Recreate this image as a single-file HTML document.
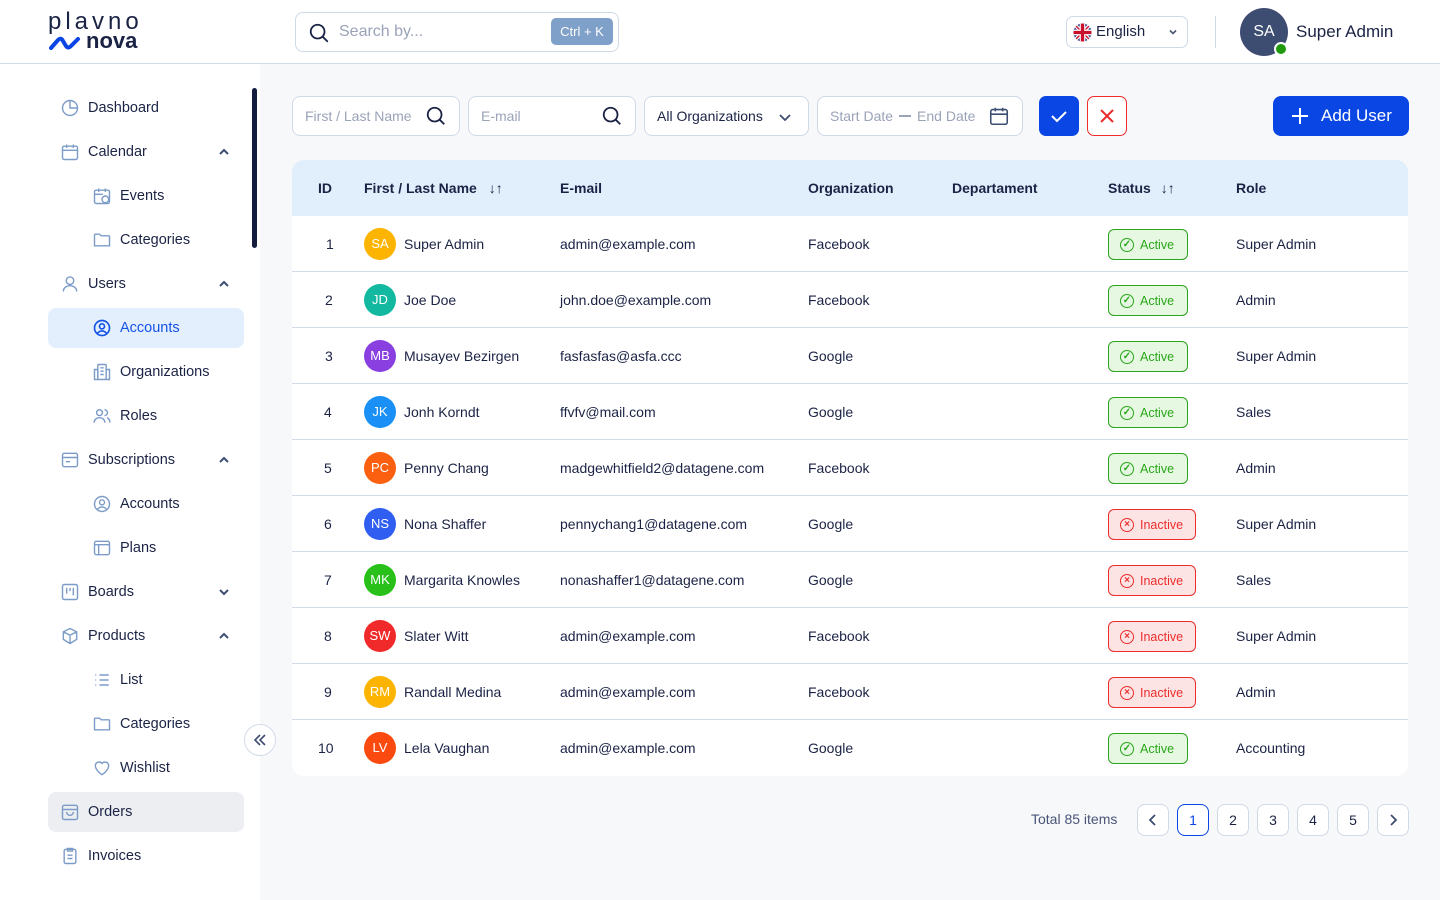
<!DOCTYPE html>
<html><head><meta charset="utf-8"><style>
*{box-sizing:border-box;margin:0;padding:0}
body{width:1440px;height:900px;overflow:hidden;font-family:"Liberation Sans",sans-serif;color:#1b2345;background:#f7f8fa;position:relative;font-size:14px}
.hdr{position:absolute;left:0;top:0;width:1440px;height:64px;background:#fff;border-bottom:1px solid #d3dbe8}
.side{position:absolute;left:0;top:64px;width:260px;height:836px;background:#fff}
.abs{position:absolute}
.it{position:absolute;left:48px;width:196px;height:40px;display:flex;align-items:center;font-size:14.5px;border-radius:8px}
.it svg{position:absolute;left:12px;width:20px;height:20px}
.it span{position:absolute;left:40px}
.it.sub svg{left:44px}.it.sub span{left:72px}
.it svg.chev{left:auto;right:14px;top:14px;width:12px;height:12px}
.inp{position:absolute;top:96px;height:40px;background:#fff;border:1px solid #cfd9e8;border-radius:8px;font-size:14px;color:#9aa3b8;display:flex;align-items:center;padding-left:12px}
.tbl{position:absolute;left:292px;top:160px;width:1116px;height:616px;background:#fff;border-radius:12px;overflow:hidden}
.th{position:absolute;left:0;top:0;width:1116px;height:56px;background:#e1eefc;font-weight:bold;font-size:14px}
.row{position:absolute;left:0;width:1116px;height:56px;border-bottom:1px solid #d3dbe8;font-size:14px}
.c{position:absolute;top:0;line-height:56px;white-space:nowrap}
.av{position:absolute;left:72px;top:12px;width:32px;height:32px;border-radius:50%;color:#fff;font-size:13px;text-align:center;line-height:32px}
.st{position:absolute;left:816px;top:13px;height:31px;border-radius:6px;font-size:12.5px;display:flex;align-items:center;padding:0 0 0 11px;gap:6px}
.st i{display:inline-block;width:14px;height:14px;border:1.4px solid currentColor;border-radius:50%;font-style:normal;font-size:10px;line-height:11px;text-align:center;font-weight:bold}
.act{background:#e6f8e1;border:1px solid #2aa61a;color:#2aa61a;width:80px}
.ina{background:#fde4e4;border:1px solid #ee2c2c;color:#ee2c2c;width:88px}
.pg{position:absolute;top:804px;width:32px;height:32px;border:1px solid #cfd9e8;border-radius:8px;background:#fff;text-align:center;line-height:30px;font-size:14px}
</style></head><body>
<div class="hdr">
 <div class="abs" style="left:48px;top:8px;font-size:24px;letter-spacing:4px;color:#1b2345;font-weight:300">plavno</div>
 <svg class="abs" style="left:48px;top:36px" width="34" height="14" viewBox="0 0 34 14"><path d="M3 12 L10 4 Q13 1 15 5 L18 10 Q20 13 23 10 L30 3" stroke="#0a46e4" stroke-width="4" fill="none" stroke-linecap="round"/></svg>
 <div class="abs" style="left:86px;top:28px;font-size:22px;font-weight:bold;color:#1b2345">nova</div>
 <div class="abs" style="left:295px;top:12px;width:324px;height:40px;border:1px solid #cfd9e8;border-radius:8px">
  <svg class="abs" style="left:12px;top:9px" width="22" height="22" viewBox="0 0 24 24"><circle cx="10.5" cy="10.5" r="7.5" stroke="#1b2345" stroke-width="2" fill="none"/><path d="M16 16l5 5" stroke="#1b2345" stroke-width="2" stroke-linecap="round"/></svg>
  <div class="abs" style="left:43px;top:10px;font-size:16px;color:#9aa3b8">Search by...</div>
  <div class="abs" style="left:255px;top:5px;width:62px;height:27px;background:#7fa0c8;border-radius:5px;color:#fff;font-size:13px;text-align:center;line-height:27px">Ctrl + K</div>
 </div>
 <div class="abs" style="left:1066px;top:16px;width:122px;height:32px;border:1px solid #cfd9e8;border-radius:7px">
  <svg class="abs" style="left:6px;top:6px" width="19" height="19" viewBox="0 0 20 20"><clipPath id="f"><circle cx="10" cy="10" r="9.5"/></clipPath><g clip-path="url(#f)"><rect width="20" height="20" fill="#1c2f7a"/><path d="M0 0L20 20M20 0L0 20" stroke="#fff" stroke-width="4"/><path d="M0 0L20 20M20 0L0 20" stroke="#c8102e" stroke-width="1.5"/><path d="M10 0V20M0 10H20" stroke="#fff" stroke-width="6"/><path d="M10 0V20M0 10H20" stroke="#c8102e" stroke-width="3.5"/></g></svg>
  <div class="abs" style="left:29px;top:6px;font-size:15px">English</div>
  <svg class="abs" style="left:100px;top:9px" width="12" height="12" viewBox="0 0 12 12"><path d="M3 4.5l3 3 3-3" stroke="#4a5578" stroke-width="1.6" fill="none"/></svg>
 </div>
 <div class="abs" style="left:1215px;top:16px;width:1px;height:32px;background:#cfd9e8"></div>
 <div class="abs" style="left:1240px;top:8px;width:48px;height:48px;border-radius:50%;background:#3d4d72;color:#fff;font-size:16px;text-align:center;line-height:48px">SA</div>
 <div class="abs" style="left:1274px;top:42px;width:14px;height:14px;border-radius:50%;background:#1f9a0f;border:2px solid #fff"></div>
 <div class="abs" style="left:1296px;top:22px;font-size:17px">Super Admin</div>
</div>

<div class="side">
 <div class="abs" style="left:252px;top:24px;width:5px;height:160px;border-radius:3px;background:#141d3d"></div>
</div>
<div style="position:absolute;left:0;top:0">
 <div class="it" style="top:88px"><svg viewBox="0 0 24 24" fill="none" stroke="#7c9cc8" stroke-width="1.7"><circle cx="12" cy="12" r="9"/><path d="M12 3v9h9"/></svg><span>Dashboard</span></div>
 <div class="it" style="top:132px"><svg viewBox="0 0 24 24" fill="none" stroke="#7c9cc8" stroke-width="1.7"><rect x="3" y="5" width="18" height="16" rx="2"/><path d="M3 10h18M8 3v4M16 3v4"/></svg><span>Calendar</span><svg class="chev" viewBox="0 0 12 12"><path d="M2 8l4-4 4 4" stroke="#3d4d72" stroke-width="2" fill="none"/></svg></div>
 <div class="it sub" style="top:176px"><svg viewBox="0 0 24 24" fill="none" stroke="#7c9cc8" stroke-width="1.7"><rect x="3" y="5" width="18" height="16" rx="2"/><path d="M3 10h10M8 3v4M16 3v4"/><circle cx="16" cy="16" r="4"/></svg><span>Events</span></div>
 <div class="it sub" style="top:220px"><svg viewBox="0 0 24 24" fill="none" stroke="#7c9cc8" stroke-width="1.7"><path d="M3 6a1 1 0 011-1h5l2 2h9a1 1 0 011 1v11H3z"/></svg><span>Categories</span></div>
 <div class="it" style="top:264px"><svg viewBox="0 0 24 24" fill="none" stroke="#7c9cc8" stroke-width="1.7"><circle cx="12" cy="8" r="4.5"/><path d="M4 21c0-4 3.5-7 8-7s8 3 8 7"/></svg><span>Users</span><svg class="chev" viewBox="0 0 12 12"><path d="M2 8l4-4 4 4" stroke="#3d4d72" stroke-width="2" fill="none"/></svg></div>
 <div class="it sub" style="top:308px;background:#e4effd;color:#1553e6"><svg viewBox="0 0 24 24" fill="none" stroke="#1553e6" stroke-width="2"><circle cx="12" cy="12" r="9"/><circle cx="12" cy="10" r="3"/><path d="M6.5 18.5c1.5-2 3.3-3 5.5-3s4 1 5.5 3"/></svg><span>Accounts</span></div>
 <div class="it sub" style="top:352px"><svg viewBox="0 0 24 24" fill="none" stroke="#7c9cc8" stroke-width="1.7"><rect x="7" y="3" width="10" height="18" rx="1"/><path d="M3 9h4v12H3zM17 9h4v12h-4M10 7h4M10 11h4M10 15h4"/></svg><span>Organizations</span></div>
 <div class="it sub" style="top:396px"><svg viewBox="0 0 24 24" fill="none" stroke="#7c9cc8" stroke-width="1.7"><circle cx="9" cy="8" r="3.5"/><path d="M2.5 20c0-3.5 3-6 6.5-6s6.5 2.5 6.5 6M15 4.5a3.5 3.5 0 010 7M18 14c2 .8 3.5 3 3.5 6"/></svg><span>Roles</span></div>
 <div class="it" style="top:440px"><svg viewBox="0 0 24 24" fill="none" stroke="#7c9cc8" stroke-width="1.7"><rect x="3" y="4" width="18" height="16" rx="2"/><path d="M3 9h18M7 14h5"/></svg><span>Subscriptions</span><svg class="chev" viewBox="0 0 12 12"><path d="M2 8l4-4 4 4" stroke="#3d4d72" stroke-width="2" fill="none"/></svg></div>
 <div class="it sub" style="top:484px"><svg viewBox="0 0 24 24" fill="none" stroke="#7c9cc8" stroke-width="1.7"><circle cx="12" cy="12" r="9"/><circle cx="12" cy="10" r="3"/><path d="M6.5 18.5c1.5-2 3.3-3 5.5-3s4 1 5.5 3"/></svg><span>Accounts</span></div>
 <div class="it sub" style="top:528px"><svg viewBox="0 0 24 24" fill="none" stroke="#7c9cc8" stroke-width="1.7"><rect x="3" y="4" width="18" height="16" rx="2"/><path d="M3 8h18M8 8v12"/></svg><span>Plans</span></div>
 <div class="it" style="top:572px"><svg viewBox="0 0 24 24" fill="none" stroke="#7c9cc8" stroke-width="1.7"><rect x="3" y="3" width="18" height="18" rx="2"/><path d="M8 7v7M12 7v4M16 7v9"/></svg><span>Boards</span><svg class="chev" viewBox="0 0 12 12"><path d="M2 4l4 4 4-4" stroke="#3d4d72" stroke-width="2" fill="none"/></svg></div>
 <div class="it" style="top:616px"><svg viewBox="0 0 24 24" fill="none" stroke="#7c9cc8" stroke-width="1.7"><path d="M12 3l8 4v9l-8 5-8-5V7z M4 7l8 4 8-4M12 11v10"/></svg><span>Products</span><svg class="chev" viewBox="0 0 12 12"><path d="M2 8l4-4 4 4" stroke="#3d4d72" stroke-width="2" fill="none"/></svg></div>
 <div class="it sub" style="top:660px"><svg viewBox="0 0 24 24" fill="none" stroke="#7c9cc8" stroke-width="1.7"><path d="M4 6h1M4 12h1M4 18h1M9 6h11M9 12h11M9 18h11"/></svg><span>List</span></div>
 <div class="it sub" style="top:704px"><svg viewBox="0 0 24 24" fill="none" stroke="#7c9cc8" stroke-width="1.7"><path d="M3 6a1 1 0 011-1h5l2 2h9a1 1 0 011 1v11H3z"/></svg><span>Categories</span></div>
 <div class="it sub" style="top:748px"><svg viewBox="0 0 24 24" fill="none" stroke="#7c9cc8" stroke-width="1.7"><path d="M12 20s-8-5-8-11a4.5 4.5 0 018-2.5A4.5 4.5 0 0120 9c0 6-8 11-8 11z"/></svg><span>Wishlist</span></div>
 <div class="it" style="top:792px;background:#eceef2"><svg viewBox="0 0 24 24" fill="none" stroke="#7c9cc8" stroke-width="1.7"><rect x="3" y="4" width="18" height="17" rx="2"/><path d="M3 9h18M8 12a4 4 0 008 0"/></svg><span>Orders</span></div>
 <div class="it" style="top:836px"><svg viewBox="0 0 24 24" fill="none" stroke="#7c9cc8" stroke-width="1.7"><rect x="5" y="4" width="14" height="17" rx="2"/><path d="M9 3h6v3H9zM9 11h6M9 15h6"/></svg><span>Invoices</span></div>
 <div class="abs" style="left:244px;top:724px;width:32px;height:32px;border-radius:50%;background:#fff;border:1px solid #d3dbe8"><svg class="abs" style="left:7px;top:7px" width="16" height="16" viewBox="0 0 16 16"><path d="M8 3L3 8l5 5M13 3L8 8l5 5" stroke="#3d4d72" stroke-width="1.6" fill="none"/></svg></div>
</div>

<div class="inp" style="left:292px;width:168px">First / Last Name<svg class="abs" style="left:132px;top:8px" width="22" height="22" viewBox="0 0 24 24"><circle cx="10.5" cy="10.5" r="7.5" stroke="#1b2345" stroke-width="2" fill="none"/><path d="M16 16l5 5" stroke="#1b2345" stroke-width="2"/></svg></div>
<div class="inp" style="left:468px;width:168px">E-mail<svg class="abs" style="left:132px;top:8px" width="22" height="22" viewBox="0 0 24 24"><circle cx="10.5" cy="10.5" r="7.5" stroke="#1b2345" stroke-width="2" fill="none"/><path d="M16 16l5 5" stroke="#1b2345" stroke-width="2"/></svg></div>
<div class="inp" style="left:644px;width:165px;color:#1b2345">All Organizations<svg class="abs" style="left:132px;top:12px" width="16" height="16" viewBox="0 0 16 16"><path d="M3 6l5 5 5-5" stroke="#3d4d72" stroke-width="1.8" fill="none"/></svg></div>
<div class="inp" style="left:817px;width:206px">Start Date <span style="display:inline-block;width:12px;height:1.5px;background:#9aa3b8;margin:0 6px"></span> End Date<svg class="abs" style="left:170px;top:8px" width="22" height="22" viewBox="0 0 24 24" fill="none" stroke="#3d4d72" stroke-width="1.7"><rect x="3" y="5" width="18" height="16" rx="2"/><path d="M3 10h18M8 3v4M16 3v4"/></svg></div>
<div class="abs" style="left:1039px;top:96px;width:40px;height:40px;border-radius:7px;background:#0a46e4"><svg class="abs" style="left:10px;top:10px" width="20" height="20" viewBox="0 0 20 20"><path d="M3 10l5 5 9-9" stroke="#fff" stroke-width="2" fill="none"/></svg></div>
<div class="abs" style="left:1087px;top:96px;width:40px;height:40px;border-radius:7px;background:#fff;border:1px solid #ee2c2c"><svg class="abs" style="left:10px;top:10px" width="18" height="18" viewBox="0 0 18 18"><path d="M3 3l12 12M15 3L3 15" stroke="#ee2c2c" stroke-width="2"/></svg></div>
<div class="abs" style="left:1273px;top:96px;width:136px;height:40px;border-radius:8px;background:#0a46e4;color:#fff;font-size:17px;line-height:40px;padding-left:48px">Add User<svg class="abs" style="left:18px;top:11px" width="18" height="18" viewBox="0 0 18 18"><path d="M9 1v16M1 9h16" stroke="#fff" stroke-width="2"/></svg></div>

<div class="tbl">
 <div class="th">
  <div class="c" style="left:26px">ID</div>
  <div class="c" style="left:72px">First / Last Name <span style="font-weight:normal;margin-left:8px">↓↑</span></div>
  <div class="c" style="left:268px">E-mail</div>
  <div class="c" style="left:516px">Organization</div>
  <div class="c" style="left:660px">Departament</div>
  <div class="c" style="left:816px">Status <span style="font-weight:normal;margin-left:6px">↓↑</span></div>
  <div class="c" style="left:944px">Role</div>
 </div>
 <div class="row" style="top:56px"><div class="c" style="left:34px">1</div><div class="av" style="background:#fdb400">SA</div><div class="c" style="left:112px">Super Admin</div><div class="c" style="left:268px">admin@example.com</div><div class="c" style="left:516px">Facebook</div><div class="st act"><i>✓</i>Active</div><div class="c" style="left:944px">Super Admin</div></div>
 <div class="row" style="top:112px"><div class="c" style="left:33px">2</div><div class="av" style="background:#13b8a0">JD</div><div class="c" style="left:112px">Joe Doe</div><div class="c" style="left:268px">john.doe@example.com</div><div class="c" style="left:516px">Facebook</div><div class="st act"><i>✓</i>Active</div><div class="c" style="left:944px">Admin</div></div>
 <div class="row" style="top:168px"><div class="c" style="left:33px">3</div><div class="av" style="background:#8a3fe0">MB</div><div class="c" style="left:112px">Musayev Bezirgen</div><div class="c" style="left:268px">fasfasfas@asfa.ccc</div><div class="c" style="left:516px">Google</div><div class="st act"><i>✓</i>Active</div><div class="c" style="left:944px">Super Admin</div></div>
 <div class="row" style="top:224px"><div class="c" style="left:32px">4</div><div class="av" style="background:#1a8ff5">JK</div><div class="c" style="left:112px">Jonh Korndt</div><div class="c" style="left:268px">ffvfv@mail.com</div><div class="c" style="left:516px">Google</div><div class="st act"><i>✓</i>Active</div><div class="c" style="left:944px">Sales</div></div>
 <div class="row" style="top:280px"><div class="c" style="left:32px">5</div><div class="av" style="background:#fa6010">PC</div><div class="c" style="left:112px">Penny Chang</div><div class="c" style="left:268px">madgewhitfield2@datagene.com</div><div class="c" style="left:516px">Facebook</div><div class="st act"><i>✓</i>Active</div><div class="c" style="left:944px">Admin</div></div>
 <div class="row" style="top:336px"><div class="c" style="left:32px">6</div><div class="av" style="background:#2f5ef0">NS</div><div class="c" style="left:112px">Nona Shaffer</div><div class="c" style="left:268px">pennychang1@datagene.com</div><div class="c" style="left:516px">Google</div><div class="st ina"><i>×</i>Inactive</div><div class="c" style="left:944px">Super Admin</div></div>
 <div class="row" style="top:392px"><div class="c" style="left:32px">7</div><div class="av" style="background:#2ac01a">MK</div><div class="c" style="left:112px">Margarita Knowles</div><div class="c" style="left:268px">nonashaffer1@datagene.com</div><div class="c" style="left:516px">Google</div><div class="st ina"><i>×</i>Inactive</div><div class="c" style="left:944px">Sales</div></div>
 <div class="row" style="top:448px"><div class="c" style="left:32px">8</div><div class="av" style="background:#f02a2a">SW</div><div class="c" style="left:112px">Slater Witt</div><div class="c" style="left:268px">admin@example.com</div><div class="c" style="left:516px">Facebook</div><div class="st ina"><i>×</i>Inactive</div><div class="c" style="left:944px">Super Admin</div></div>
 <div class="row" style="top:504px"><div class="c" style="left:32px">9</div><div class="av" style="background:#fdb400">RM</div><div class="c" style="left:112px">Randall Medina</div><div class="c" style="left:268px">admin@example.com</div><div class="c" style="left:516px">Facebook</div><div class="st ina"><i>×</i>Inactive</div><div class="c" style="left:944px">Admin</div></div>
 <div class="row" style="top:560px;border-bottom:none"><div class="c" style="left:26px">10</div><div class="av" style="background:#fa4a10">LV</div><div class="c" style="left:112px">Lela Vaughan</div><div class="c" style="left:268px">admin@example.com</div><div class="c" style="left:516px">Google</div><div class="st act"><i>✓</i>Active</div><div class="c" style="left:944px">Accounting</div></div>
</div>

<div class="abs" style="left:1031px;top:811px;font-size:14px;color:#4a5578">Total 85 items</div>
<div class="pg" style="left:1137px"><svg width="14" height="14" viewBox="0 0 14 14" style="margin-top:8px"><path d="M9 2L4 7l5 5" stroke="#3d4d72" stroke-width="1.8" fill="none"/></svg></div>
<div class="pg" style="left:1177px;border-color:#0a46e4;color:#0a46e4">1</div>
<div class="pg" style="left:1217px">2</div>
<div class="pg" style="left:1257px">3</div>
<div class="pg" style="left:1297px">4</div>
<div class="pg" style="left:1337px">5</div>
<div class="pg" style="left:1377px"><svg width="14" height="14" viewBox="0 0 14 14" style="margin-top:8px"><path d="M5 2l5 5-5 5" stroke="#3d4d72" stroke-width="1.8" fill="none"/></svg></div>
</body></html>
